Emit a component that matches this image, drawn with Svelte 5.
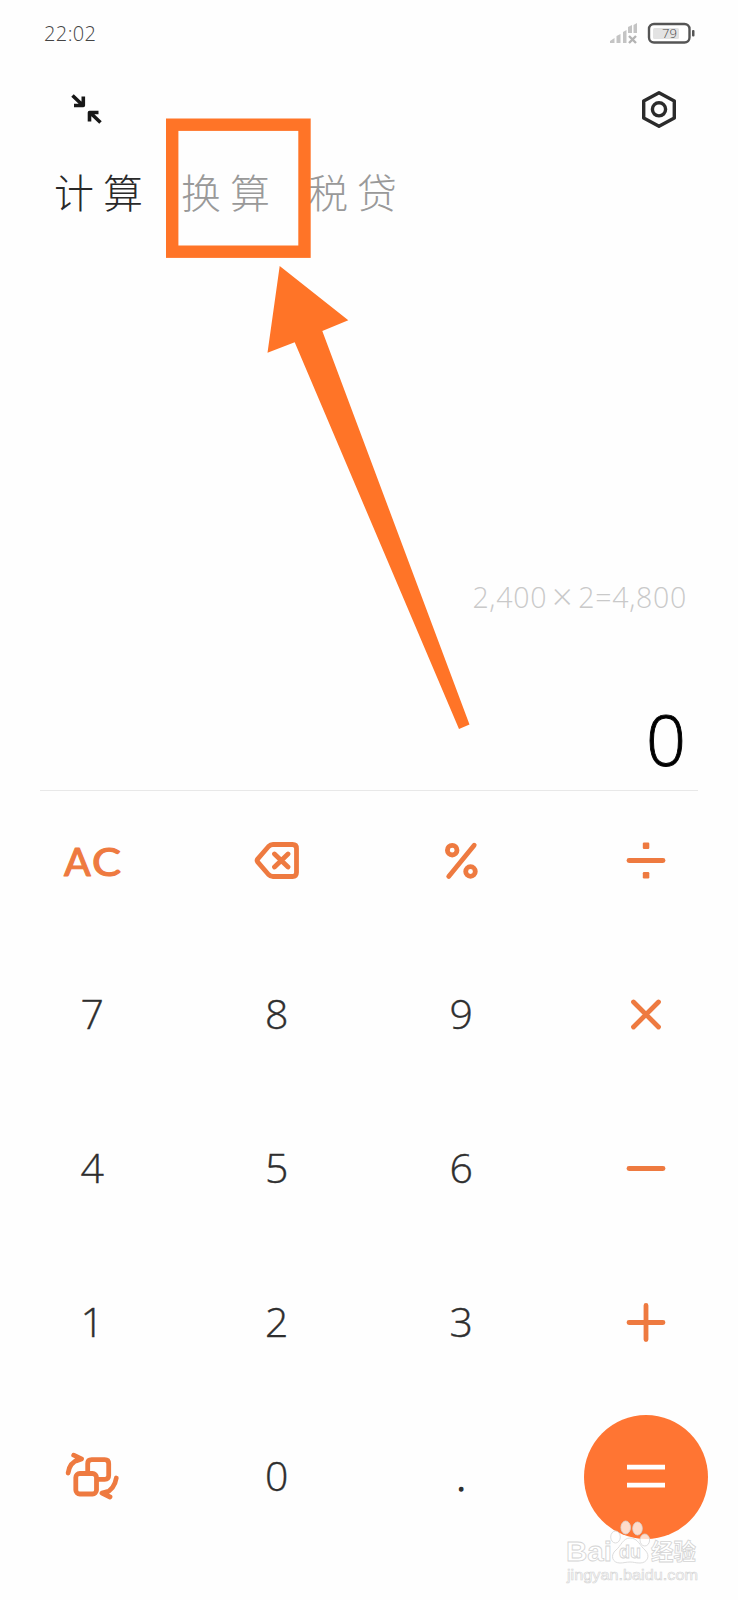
<script>
  const keys = [
    'clear', 'erase', 'percent', 'divide',
    '7', '8', '9', 'times',
    '4', '5', '6', 'minus',
    '1', '2', '3', 'plus',
    'convert', '0', '.', 'equals'
  ];
  const tabs = ['计算', '换算', '税贷'];
  let active = $state(0);
</script>

<main>
  <header class="status">
    <span class="time">22:02</span>
    <svg class="signal" width="30" height="22" viewBox="609 22 30 22">
      <path fill="#c4c4c4" d="M610 43v-2l4.500-3v5zM616.500 43v-7l4-2v9zM623 43V32l3.500-2v13zM628 33v-6l4-2v8zM633.500 33V25l3.500-2v10z" />
      <path stroke="#b4b4b4" stroke-width="2.4" d="m629 36 7 7m0-7-7 7" />
    </svg>
    <svg class="battery" width="48" height="24" viewBox="647 21 48 24">
      <rect x="649" y="24" width="40.500" height="18.500" rx="5" fill="#fff" stroke="#555" stroke-width="2.4" />
      <rect x="653" y="28" width="26" height="11" rx="1.500" fill="#e3e3e3" />
      <rect x="692" y="30" width="2.500" height="6.500" rx="1" fill="#555" />
      <text x="669.500" y="38" text-anchor="middle">79</text>
    </svg>
  </header>

  <div class="tools">
    <svg width="34" height="34" viewBox="69 92 34 34" fill="none" stroke="#171717" stroke-width="3.6" stroke-linejoin="round">
      <path d="m72.500 95.500 10.500 10M74 105.500h9.300v-9M100.500 122.500l-10.500-10M98.500 112.500h-9v9" />
    </svg>
    <svg width="40" height="40" viewBox="639 89 40 40" fill="none" stroke="#2b2b2b" stroke-width="3.400" stroke-linejoin="round">
      <path d="m659 92.800 15.300 8.200v17l-15.300 8.200-15.300-8.200v-17z" />
      <circle cx="659" cy="109.300" r="6.600" />
    </svg>
  </div>

  <nav>
    {#each tabs as tab, i}
      <button class="tab" class:active={active === i} onclick={() => (active = i)}>{tab}</button>
    {/each}
  </nav>

  <section class="display">
    <div class="history">2,400<span>×</span>2=4,800</div>
    <div class="result">0</div>
  </section>

  <section class="keypad">
    {#each keys as key}
      {#if key.length === 1}
        <button class="digit" class:dot={key === '.'}>{key}</button>
      {:else}
        <button class="op" class:equals={key === 'equals'} aria-label={key}>
          <svg width="64" height="64" viewBox="-32 -31.500 64 64">
            {#if key === 'clear'}
              <text class="ac" x="-28" y="15">A</text>
              <text class="ac" x="0" y="15" textLength="29" lengthAdjust="spacingAndGlyphs">C</text>
            {:else if key === 'erase'}
              <path d="M-19.200-1.700-8.500-14Q-6.500-16-4-16H15.500q4 0 4 4V12q0 4-4 4H-4q-2.500 0-4.500-2L-19.200 1.700q-1.400-1.700 0-3.400zM-2.500-6.500 11 6.500m0-13L-2.500 6.500" />
            {:else if key === 'percent'}
              <circle cx="-8.800" cy="-10.300" r="4.800" />
              <circle cx="9.500" cy="11" r="4.800" />
              <path d="m13.200-15.300-25.500 31.300" stroke-width="4.800" />
            {:else if key === 'divide'}
              <path d="M-17 0h34" />
              <rect class="point" x="-3.200" y="-18" width="6.500" height="6.500" rx="1.200" />
              <rect class="point" x="-3.200" y="11.500" width="6.500" height="6.500" rx="1.200" />
            {:else if key === 'times'}
              <path d="m-12.500-12.500 25 25m0-25-25 25" />
            {:else if key === 'minus'}
              <path d="M-17 0h34" />
            {:else if key === 'plus'}
              <path d="M-17 0h34M0-17v34" />
            {:else if key === 'convert'}
              <rect x="-16.200" y="-3" width="20.700" height="20.500" rx="4" />
              <path d="M-4.300-4v-8.800q0-4 4-4H12.700q4 0 4 4V-1.200q0 4-4 4H6M-23.900-3.500Q-22.500-14-13-17.200M-18.300-21.300l7.800 3.700-5.500 2M24.300 1.500Q22.500 13 12.500 17M18 20.500l-8-4 5.500-1.500" />
            {:else}
              <path d="M-19-9.300h38M-19 8.700h38" stroke="#fff" stroke-linecap="butt" />
            {/if}
          </svg>
        </button>
      {/if}
    {/each}
  </section>

  <svg class="overlay" width="738" height="1600" viewBox="0 0 738 1600">
    <rect x="172.200" y="124.700" width="132.300" height="127" fill="none" stroke="#ff7427" stroke-width="12.400" />
    <path fill="#ff7427" d="m279.700 266 68.600 54.200-26 10.800 147.200 393.500L459 729 294.700 342.300l-27.200 10.400z" />
    <g class="mark">
      <g class="paw">
        <ellipse cx="615.500" cy="1537" rx="4.800" ry="6" />
        <ellipse cx="625.700" cy="1527.500" rx="4.800" ry="6.500" />
        <ellipse cx="637.500" cy="1528.500" rx="4.800" ry="6.500" />
        <ellipse cx="644.800" cy="1540" rx="4.800" ry="6" />
        <path d="M630 1538c8 0 10 8 15 12 6 6 2 13-5 13-5 0-6-1-10-1s-6 1-10 1c-8 0-10-8-4-13 5-4 7-12 14-12z" />
      </g>
      <text class="brand" x="566" y="1561" textLength="46" lengthAdjust="spacingAndGlyphs">Bai</text>
      <text class="du" x="630" y="1558" text-anchor="middle">du</text>
      <text class="han" x="651" y="1560">经验</text>
      <text class="site" x="567" y="1580" textLength="131" lengthAdjust="spacingAndGlyphs">jingyan.baidu.com</text>
    </g>
  </svg>
</main>

<style>
  :global(body) { margin: 0; background: #fefefe; }
  main {
    position: relative;
    display: flex;
    flex-direction: column;
    width: 738px;
    height: 1600px;
    overflow: hidden;
    background: #fefefe;
    font-family: "Open Sans", "Noto Sans CJK SC", sans-serif;
    font-weight: 300;
  }
  button { padding: 0; border: 0; background: none; font: inherit; }
  svg { display: block; flex: none; }
  .status {
    display: flex;
    align-items: center;
    box-sizing: border-box;
    height: 66px;
    padding: 0 43px 0 44px;
  }
  .time { flex: 1; color: #444; font-size: 20px; letter-spacing: 0.4px; }
  .signal { margin-right: 8px; }
  .battery text { fill: #444; font-size: 13px; }
  .tools {
    display: flex;
    align-items: center;
    justify-content: space-between;
    height: 86px;
    padding: 0 59px 0 69px;
  }
  nav { display: flex; height: 78px; margin-bottom: 4px; padding-left: 54px; }
  .tab {
    width: 127px;
    color: #999;
    font-family: "Noto Sans CJK SC", sans-serif;
    font-size: 40px;
    letter-spacing: 9px;
    text-align: left;
    white-space: nowrap;
  }
  .tab.active { color: #292929; }
  .display {
    display: flex;
    flex: none;
    flex-direction: column;
    align-items: flex-end;
    justify-content: flex-end;
    box-sizing: border-box;
    height: 557px;
    margin: 0 40px;
    border-bottom: 1px solid #e8e8e8;
  }
  .history {
    display: flex;
    margin-right: 11px;
    color: #c9c9c9;
    font-size: 28.500px;
    line-height: 40px;
    letter-spacing: 0.7px;
  }
  .history span { margin: 0 5px; font-size: 36px; }
  .result {
    margin: 73px 12px 0 0;
    color: #000;
    font-size: 70px;
    line-height: 100px;
    position: relative;
    top: -1px;
    -webkit-text-stroke: 0.9px #000;
  }
  .keypad {
    display: grid;
    grid-template-columns: repeat(4, 1fr);
    grid-auto-rows: 154px;
    margin-top: -7px;
  }
  .keypad button { display: grid; place-items: center; }
  .keypad .digit {
    padding-bottom: 5px;
    color: #2e2e2e;
    font-size: 41px;
    -webkit-text-stroke: 0.4px #2e2e2e;
  }
  .keypad .dot { -webkit-text-stroke-width: 1.4px; }
  .op svg {
    fill: none;
    stroke: #ee7a40;
    stroke-width: 4.8;
    stroke-linecap: round;
    stroke-linejoin: round;
    overflow: visible;
  }
  .op .point { fill: #ee7a40; stroke: none; }
  .op .ac {
    fill: #ee7a40;
    stroke-width: 1.2;
    font-family: Lato, sans-serif;
    font-size: 39.500px;
    font-weight: 400;
  }
  .equals svg { padding: 30px; border-radius: 50%; background: #ff7533; }
  .overlay { position: absolute; inset: 0; pointer-events: none; }
  .mark { fill: #fff; stroke: #d4d4d4; stroke-width: 0.8; }
  .paw { fill-opacity: 0.75; }
  .brand, .du, .site { font-family: "Liberation Sans", sans-serif; font-weight: 700; }
  .brand { font-size: 28px; }
  .du { font-size: 18px; }
  .han { font-family: "Noto Sans CJK SC", sans-serif; font-size: 22.500px; font-weight: 700; }
  .site { font-size: 15px; font-weight: 400; stroke-width: 0.6; }
</style>
